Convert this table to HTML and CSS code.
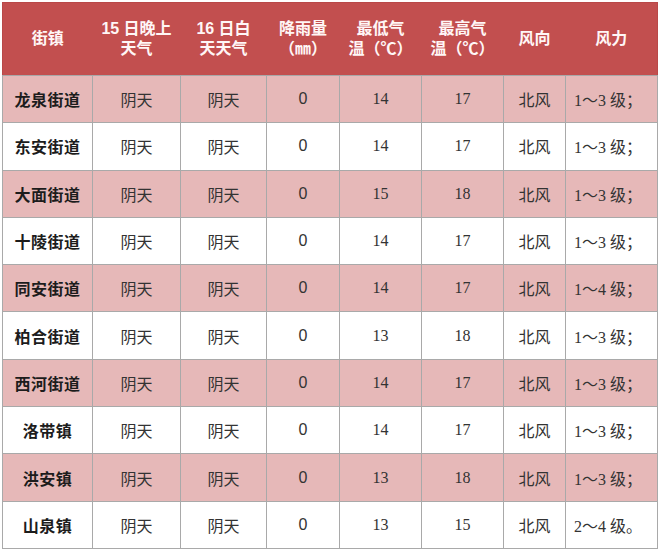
FILE: index.html
```html
<!DOCTYPE html>
<html lang="zh">
<head>
<meta charset="utf-8">
<link rel="stylesheet" href="styles.css">
</head>
<body>
<div class="wrap">
<table class="wx">
<colgroup>
<col class="c1"><col class="c2"><col class="c3"><col class="c4"><col class="c5"><col class="c6"><col class="c7"><col class="c8">
</colgroup>
<thead>
<tr>
<th>街镇</th>
<th>15 日晚上<br>天气</th>
<th>16 日白<br>天天气</th>
<th>降雨量<br>（㎜）</th>
<th>最低气<br>温（℃）</th>
<th>最高气<br>温（℃）</th>
<th>风向</th>
<th>风力</th>
</tr>
</thead>
<tbody>
<tr class="pink"><td class="town">龙泉街道</td><td class="sky">阴天</td><td class="sky">阴天</td><td class="rain">0</td><td class="num">14</td><td class="num">17</td><td class="dir">北风</td><td class="force">1～3 级；</td></tr>
<tr><td class="town">东安街道</td><td class="sky">阴天</td><td class="sky">阴天</td><td class="rain">0</td><td class="num">14</td><td class="num">17</td><td class="dir">北风</td><td class="force">1～3 级；</td></tr>
<tr class="pink"><td class="town">大面街道</td><td class="sky">阴天</td><td class="sky">阴天</td><td class="rain">0</td><td class="num">15</td><td class="num">18</td><td class="dir">北风</td><td class="force">1～3 级；</td></tr>
<tr><td class="town">十陵街道</td><td class="sky">阴天</td><td class="sky">阴天</td><td class="rain">0</td><td class="num">14</td><td class="num">17</td><td class="dir">北风</td><td class="force">1～3 级；</td></tr>
<tr class="pink"><td class="town">同安街道</td><td class="sky">阴天</td><td class="sky">阴天</td><td class="rain">0</td><td class="num">14</td><td class="num">17</td><td class="dir">北风</td><td class="force">1～4 级；</td></tr>
<tr><td class="town">柏合街道</td><td class="sky">阴天</td><td class="sky">阴天</td><td class="rain">0</td><td class="num">13</td><td class="num">18</td><td class="dir">北风</td><td class="force">1～3 级；</td></tr>
<tr class="pink"><td class="town">西河街道</td><td class="sky">阴天</td><td class="sky">阴天</td><td class="rain">0</td><td class="num">14</td><td class="num">17</td><td class="dir">北风</td><td class="force">1～3 级；</td></tr>
<tr><td class="town">洛带镇</td><td class="sky">阴天</td><td class="sky">阴天</td><td class="rain">0</td><td class="num">14</td><td class="num">17</td><td class="dir">北风</td><td class="force">1～3 级；</td></tr>
<tr class="pink"><td class="town">洪安镇</td><td class="sky">阴天</td><td class="sky">阴天</td><td class="rain">0</td><td class="num">13</td><td class="num">18</td><td class="dir">北风</td><td class="force">1～3 级；</td></tr>
<tr><td class="town">山泉镇</td><td class="sky">阴天</td><td class="sky">阴天</td><td class="rain">0</td><td class="num">13</td><td class="num">15</td><td class="dir">北风</td><td class="force">2～4 级。</td></tr>
</tbody>
</table>
</div>
</body>
</html>
```
FILE: styles.css
```css
html, body {
  margin: 0;
  padding: 0;
  background: #ffffff;
}
.wrap {
  padding: 2px 0 0 2px;
}
.wx {
  border-collapse: collapse;
  table-layout: fixed;
  width: 655px;
  font-family: "Noto Sans CJK SC", sans-serif;
}
.c1 { width: 90px; }
.c2 { width: 88px; }
.c3 { width: 86px; }
.c4 { width: 73px; }
.c5 { width: 82px; }
.c6 { width: 82px; }
.c7 { width: 62px; }
.c8 { width: 92px; }

.wx th {
  background: #c24f4f;
  color: #fff6f6;
  font-family: "Liberation Sans", "Noto Sans CJK SC", sans-serif;
  font-weight: bold;
  font-size: 16px;
  line-height: 20px;
  height: 72px;
  padding: 0;
  text-align: center;
  vertical-align: middle;
  border-top: 1px solid #b94848;
  border-bottom: 1px solid #a8a8a8;
}
.wx th:first-child { border-left: 1px solid #b94848; }
.wx th:last-child { border-right: 1px solid #b94848; }

.wx td {
  height: 47.3px;
  padding: 0;
  box-sizing: border-box;
  text-align: center;
  vertical-align: middle;
  border: 1px solid #a9a9a9;
  font-size: 16px;
  color: #333333;
}
.wx tr.pink td {
  background: #e6b8b8;
}
.town {
  font-weight: bold;
  font-size: 17px;
  color: #1c1c1c !important;
  letter-spacing: 0.5px;
}
.sky {
  font-family: "Noto Sans CJK SC", sans-serif;
  color: #3a3a3a;
}
.rain {
  font-family: "Liberation Sans", sans-serif;
}
.num {
  font-family: "Liberation Serif", serif;
  font-size: 17px;
}
.dir {
  font-family: "Noto Sans CJK SC", sans-serif;
  font-weight: normal;
  color: #2e2e2e;
}
.force {
  font-family: "Liberation Serif", "Noto Sans CJK SC", serif;
  font-size: 16px;
  text-align: left !important;
  padding-left: 8px !important;
}
```
